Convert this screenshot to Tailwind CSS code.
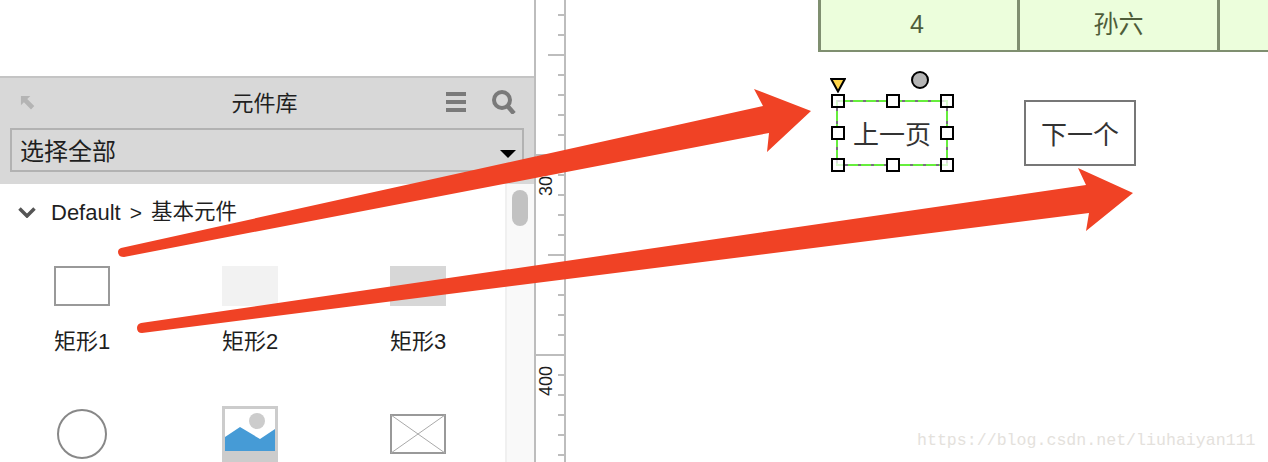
<!DOCTYPE html>
<html><head><meta charset="utf-8"><script src="https://cdn.jsdelivr.net/npm/@tailwindcss/browser@4"></script></head>
<body class="bg-white">
<div class="relative flex h-[462px] w-[1268px] overflow-hidden bg-white font-['Liberation_Sans','Noto_Sans_CJK_SC',sans-serif] text-[#1f1f1f]">
  <aside class="flex h-full w-[536px] shrink-0 flex-col border-r-2 border-[#bdbdbd]">
    <div class="h-[76px] shrink-0"></div>
    <div class="flex h-[108px] shrink-0 flex-col border-t-2 border-[#c4c4c4] bg-[#d8d8d8] px-[10px]">
      <div class="relative flex h-[50px] shrink-0 items-center justify-center">
        <svg class="absolute left-[10px] top-[17px]" width="16" height="16" viewBox="0 0 17 17"><path d="M1 1h10l-3.300 3.300 7.500 7.500-3.500 3.500-7.500-7.500L1 11z" fill="#b4b4b4"/></svg>
        <span class="pt-[2px] pr-[5px] text-[22px] leading-none">元件库</span>
        <svg class="absolute left-[436px] top-[14px]" width="20" height="20" viewBox="0 0 20 20"><path d="M0 0h20v4H0zM0 8h20v4H0zM0 16h20v4H0z" fill="#7a7a7a"/></svg>
        <svg class="absolute left-[482px] top-[12px]" width="24" height="24" viewBox="0 0 24 24"><circle cx="10" cy="10" r="8" fill="none" stroke="#7a7a7a" stroke-width="4"/><path d="M15.500 16l6.500 7.500" stroke="#7a7a7a" stroke-width="4.500"/></svg>
      </div>
      <div class="relative flex h-[44px] w-[514px] items-center border-2 border-[#b2b2b2] pl-2 pt-[4px] text-[24px] leading-none">选择全部
        <span class="absolute right-[6px] top-[20px] h-0 w-0 border-x-[8px] border-t-[8px] border-x-transparent border-t-black"></span>
      </div>
    </div>
    <div class="relative flex min-h-0 grow flex-col overflow-hidden">
      <div class="absolute right-0 top-0 h-full w-[29px] border-l-2 border-[#f0f0f0] bg-[#f9f9f9]">
        <div class="ml-[5px] mt-[6px] h-[36px] w-[16px] rounded-full bg-[#c2c2c2]"></div>
      </div>
      <div class="flex h-[56px] shrink-0 items-center pl-[18px] pt-[1px] text-[22px] leading-none">
        <svg class="mr-[15px]" width="18" height="11" viewBox="0 0 18 11"><path d="M1.500 1.500l7.500 7.500 7.500-7.500" fill="none" stroke="#555" stroke-width="3.500"/></svg>
        <span>Default</span><span class="ml-[9px] text-[21px]">&gt;</span><span class="ml-[9px] text-[21.500px]">基本元件</span>
      </div>
      <div class="-ml-[2px] grid w-[504px] grid-cols-3 justify-items-center text-[22px] leading-none">
        <div class="flex h-[140px] flex-col items-center pt-[26px]"><div class="h-[40px] w-[56px] border-2 border-[#999]"></div><span class="mt-[25px]">矩形1</span></div>
        <div class="flex h-[140px] flex-col items-center pt-[26px]"><div class="h-[40px] w-[56px] bg-[#f2f2f2]"></div><span class="mt-[25px]">矩形2</span></div>
        <div class="flex h-[140px] flex-col items-center pt-[26px]"><div class="h-[40px] w-[56px] bg-[#d7d7d7]"></div><span class="mt-[25px]">矩形3</span></div>
        <div class="pt-[29px]"><div class="h-[50px] w-[50px] rounded-full border-2 border-[#888]"></div></div>
        <div class="pt-[26px]">
          <svg width="56" height="56" viewBox="0 0 56 56"><rect width="56" height="56" fill="#ccc"/><rect x="3" y="3" width="50" height="42" fill="#fff"/><circle cx="35" cy="15" r="8" fill="#ccc"/><path d="M3 31l15-10 20 12 15-10v22H3z" fill="#469bd6"/></svg>
        </div>
        <div class="pt-[34px]">
          <svg width="56" height="40" viewBox="0 0 56 40"><rect x="1" y="1" width="54" height="38" fill="#fff" stroke="#999" stroke-width="2"/><path d="M1 1l54 38M55 1L1 39" stroke="#aaa" stroke-width="1"/></svg>
        </div>
      </div>
    </div>
  </aside>

  <div class="relative h-full w-[30px] shrink-0 border-r-2 border-[#bdbdbd]">
    <div class="absolute right-0 top-[14px] h-[2px] w-[6px] bg-[#bdbdbd]"></div>
    <div class="absolute right-0 top-[34px] h-[2px] w-[6px] bg-[#bdbdbd]"></div>
    <div class="absolute right-0 top-[54px] h-[2px] w-[16px] bg-[#bdbdbd]"></div>
    <div class="absolute right-0 top-[74px] h-[2px] w-[6px] bg-[#bdbdbd]"></div>
    <div class="absolute right-0 top-[94px] h-[2px] w-[6px] bg-[#bdbdbd]"></div>
    <div class="absolute right-0 top-[114px] h-[2px] w-[6px] bg-[#bdbdbd]"></div>
    <div class="absolute right-0 top-[134px] h-[2px] w-[6px] bg-[#bdbdbd]"></div>
    <div class="absolute right-0 top-[154px] h-[2px] w-[28px] bg-[#bdbdbd]"></div>
    <div class="absolute right-0 top-[174px] h-[2px] w-[6px] bg-[#bdbdbd]"></div>
    <div class="absolute right-0 top-[194px] h-[2px] w-[6px] bg-[#bdbdbd]"></div>
    <div class="absolute right-0 top-[214px] h-[2px] w-[6px] bg-[#bdbdbd]"></div>
    <div class="absolute right-0 top-[234px] h-[2px] w-[6px] bg-[#bdbdbd]"></div>
    <div class="absolute right-0 top-[254px] h-[2px] w-[16px] bg-[#bdbdbd]"></div>
    <div class="absolute right-0 top-[274px] h-[2px] w-[6px] bg-[#bdbdbd]"></div>
    <div class="absolute right-0 top-[294px] h-[2px] w-[6px] bg-[#bdbdbd]"></div>
    <div class="absolute right-0 top-[314px] h-[2px] w-[6px] bg-[#bdbdbd]"></div>
    <div class="absolute right-0 top-[334px] h-[2px] w-[6px] bg-[#bdbdbd]"></div>
    <div class="absolute right-0 top-[354px] h-[2px] w-[28px] bg-[#bdbdbd]"></div>
    <div class="absolute right-0 top-[374px] h-[2px] w-[6px] bg-[#bdbdbd]"></div>
    <div class="absolute right-0 top-[394px] h-[2px] w-[6px] bg-[#bdbdbd]"></div>
    <div class="absolute right-0 top-[414px] h-[2px] w-[6px] bg-[#bdbdbd]"></div>
    <div class="absolute right-0 top-[434px] h-[2px] w-[6px] bg-[#bdbdbd]"></div>
    <div class="absolute right-0 top-[454px] h-[2px] w-[6px] bg-[#bdbdbd]"></div>
    <span class="absolute left-0 top-[166px] rotate-180 text-[18px] leading-[20px] [writing-mode:vertical-rl]">300</span>
    <span class="absolute left-0 top-[366px] rotate-180 text-[18px] leading-[20px] [writing-mode:vertical-rl]">400</span>
  </div>

  <main class="relative grow">
    <div class="absolute left-[252px] top-0 flex h-[52px] w-[460px] border-b-[2px] border-l-[3px] border-[#7f8f70] bg-[#ecfedc] text-[25px] text-[#4f5d3a]">
      <div class="flex w-[199px] items-center justify-center border-r-[3px] border-[#7f8f70] pr-[4px] pb-[1px]">4</div>
      <div class="flex w-[200px] items-center justify-center border-r-[3px] border-[#7f8f70] pb-[1px]">孙六</div>
      <div class="grow"></div>
    </div>

    <div class="absolute left-[270px] top-[100px] flex h-[66px] w-[112px] items-center justify-center pt-[4px] text-[26px] leading-none text-[#333]">
      <svg class="absolute inset-0" width="112" height="66" viewBox="0 0 112 66"><rect x="1" y="1" width="110" height="64" fill="none" stroke="#66ee3c" stroke-width="2"/><rect x="1" y="1" width="110" height="64" fill="none" stroke="#7a6f80" stroke-width="2" stroke-dasharray="3 10"/></svg>
      上一页
    </div>
    <span class="absolute left-[265px] top-[94px] h-[14px] w-[14px] border-2 border-black bg-white/75"></span>
    <span class="absolute left-[320px] top-[94px] h-[14px] w-[14px] border-2 border-black bg-white"></span>
    <span class="absolute left-[374px] top-[94px] h-[14px] w-[14px] border-2 border-black bg-white/75"></span>
    <span class="absolute left-[265px] top-[126px] h-[14px] w-[14px] border-2 border-black bg-white"></span>
    <span class="absolute left-[374px] top-[126px] h-[14px] w-[14px] border-2 border-black bg-white"></span>
    <span class="absolute left-[265px] top-[158px] h-[14px] w-[14px] border-2 border-black bg-white/75"></span>
    <span class="absolute left-[320px] top-[158px] h-[14px] w-[14px] border-2 border-black bg-white"></span>
    <span class="absolute left-[374px] top-[158px] h-[14px] w-[14px] border-2 border-black bg-white/75"></span>
    <svg class="absolute left-[264px] top-[78px]" width="16" height="15" viewBox="0 0 16 15"><path d="M1.200 1h13.600L8 13.500z" fill="#ffd54a" stroke="#000" stroke-width="2"/></svg>
    <span class="absolute left-[345px] top-[71px] h-[18px] w-[18px] rounded-full border-2 border-black bg-[#b5b5b5]"></span>

    <div class="absolute left-[458px] top-[100px] flex h-[66px] w-[112px] items-center justify-center border-2 border-[#777] pt-[4px] text-[26px] leading-none text-[#333]">下一个</div>

    <span class="absolute left-[351px] top-[433px] font-['Liberation_Mono',monospace] text-[16.6px] leading-none text-[#e4e1dc]">https://blog.csdn.net/liuhaiyan111</span>
  </main>

  <svg class="pointer-events-none absolute left-0 top-0" width="1268" height="462" viewBox="0 0 1268 462">
    <path d="M121 248 L763 106 L754 89 L811 111 L767 152 L769 133 L124 257 Q118 257 118 252 Q118 249 121 248Z" fill="#f04225"/>
    <path d="M141 323 L1086 185 L1078 168 L1133 193 L1086 231 L1089 213 L142 333 Q137 333 137 328 Q137 324 141 323Z" fill="#f04225"/>
  </svg>
</div>
</body></html>
